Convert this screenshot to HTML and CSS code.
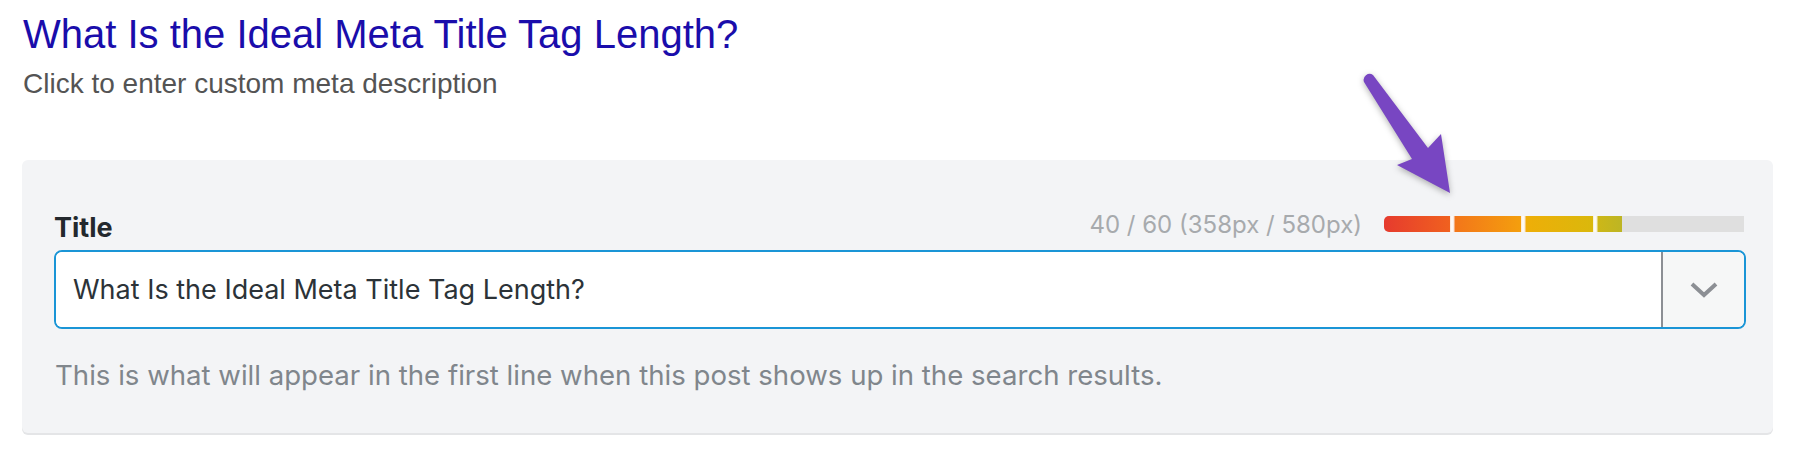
FILE: index.html
```html
<!DOCTYPE html>
<html lang="en">
<head>
  <meta charset="UTF-8" />
  <title>Meta Title Preview</title>
  <link rel="stylesheet" href="styles.css">
</head>
<body>
  <div class="page">
    <div class="serp-preview">
      <div class="serp-title">What Is the Ideal Meta Title Tag Length?</div>
      <div class="serp-desc">Click to enter custom meta description</div>
    </div>

    <div class="field-panel">
      <div class="field-head">
        <label class="field-label" for="metaTitle">Title</label>
        <div class="field-meta">
          <span class="length-count">40 / 60 (358px / 580px)</span>
          <div class="length-bar">
            <div class="length-fill" style="width: 238px;"></div>
          </div>
        </div>
      </div>

      <div class="input-group">
        <input type="text" id="metaTitle" class="title-input" value="What Is the Ideal Meta Title Tag Length?" />
        <div class="variable-toggle">
          <svg width="28" height="16" viewBox="0 0 28 16">
            <path d="M2 2 L14 13 L26 2" fill="none" stroke="#8c8f94" stroke-width="4" />
          </svg>
        </div>
      </div>

      <p class="field-help">This is what will appear in the first line when this post shows up in the search results.</p>
    </div>

    <!-- annotation arrow -->
    <svg class="callout-arrow" width="110" height="140" viewBox="0 0 110 140">
      <path d="M14 22 L62 99 L47 105 L100 133 L91 74 L78 88 L23 15 A6 6 0 0 0 14 22 Z" fill="#7846c2" />
    </svg>
  </div>
</body>
</html>
```

FILE: styles.css
```css
html, body {
  margin: 0;
  padding: 0;
  background: #fff;
}
.page {
  position: relative;
  width: 1804px;
  height: 450px;
  overflow: hidden;
}
.serp-preview {
  padding: 10px 0 0 23px;
  height: 150px;
  box-sizing: border-box;
  font-family: "Liberation Sans", Arial, sans-serif;
}
.serp-title {
  color: #1a0dab;
  font-size: 40px;
  line-height: 48px;
}
.serp-desc {
  color: #545454;
  font-size: 28px;
  line-height: 40px;
  margin-top: 6px;
}
.field-panel {
  margin: 10px 0 0 22px;
  width: 1751px;
  height: 273px;
  box-sizing: border-box;
  padding: 48px 27px 0 32px;
  background: #f3f4f6;
  border-radius: 6px;
  box-shadow: 0 2px 0 #e4e5e7;
  font-family: Inter, "Noto Sans", sans-serif;
}
.field-head {
  display: flex;
  justify-content: space-between;
  align-items: center;
  height: 32px;
  margin-bottom: 10px;
}
.field-label {
  padding-top: 6px;
  font-size: 27px;
  font-weight: 700;
  color: #23282d;
}
.field-meta {
  display: flex;
  align-items: center;
  gap: 22px;
  padding-right: 2px;
}
.length-count {
  font-size: 24px;
  color: #a7aaad;
}
.length-bar {
  width: 360px;
  height: 16px;
  background: #dfdfdf;
  border-radius: 5px 0 0 5px;
  overflow: hidden;
}
.length-fill {
  height: 100%;
  background:
    linear-gradient(90deg, transparent 66px, #f8e3d6 66px, #fff 68px, #f8e3d6 70px, transparent 71px,
      transparent 137px, #f8e8d4 137px, #fff 139px, #f8e8d4 141px, transparent 142px,
      transparent 209px, #f3ecd0 209px, #fff 211px, #f3ecd0 213px, transparent 214px),
    linear-gradient(90deg, #e63b2e 0, #f0611f 66px, #f3761a 71px, #f4a00d 139px, #eeae08 143px, #dab80c 209px, #ccb718 215px, #bdb524 238px);
}
.input-group {
  display: flex;
  height: 79px;
  box-sizing: border-box;
  border: 2px solid #1a95d6;
  border-radius: 8px;
  overflow: hidden;
  background: #fff;
}
.title-input {
  flex: 1;
  border: 0;
  outline: 0;
  padding: 0 0 0 17px;
  font-family: Inter, "Noto Sans", sans-serif;
  font-size: 27px;
  color: #2c3338;
  background: #fff;
}
.variable-toggle {
  width: 81px;
  border-left: 2px solid #8c8f94;
  background: #f6f7f7;
  display: flex;
  align-items: center;
  justify-content: center;
}
.field-help {
  margin: 29px 0 0 1px;
  font-size: 27.6px;
  color: #80868c;
}
.callout-arrow {
  position: absolute;
  left: 1350px;
  top: 60px;
  filter: drop-shadow(0 2px 3px rgba(0, 0, 0, 0.3));
}
```
